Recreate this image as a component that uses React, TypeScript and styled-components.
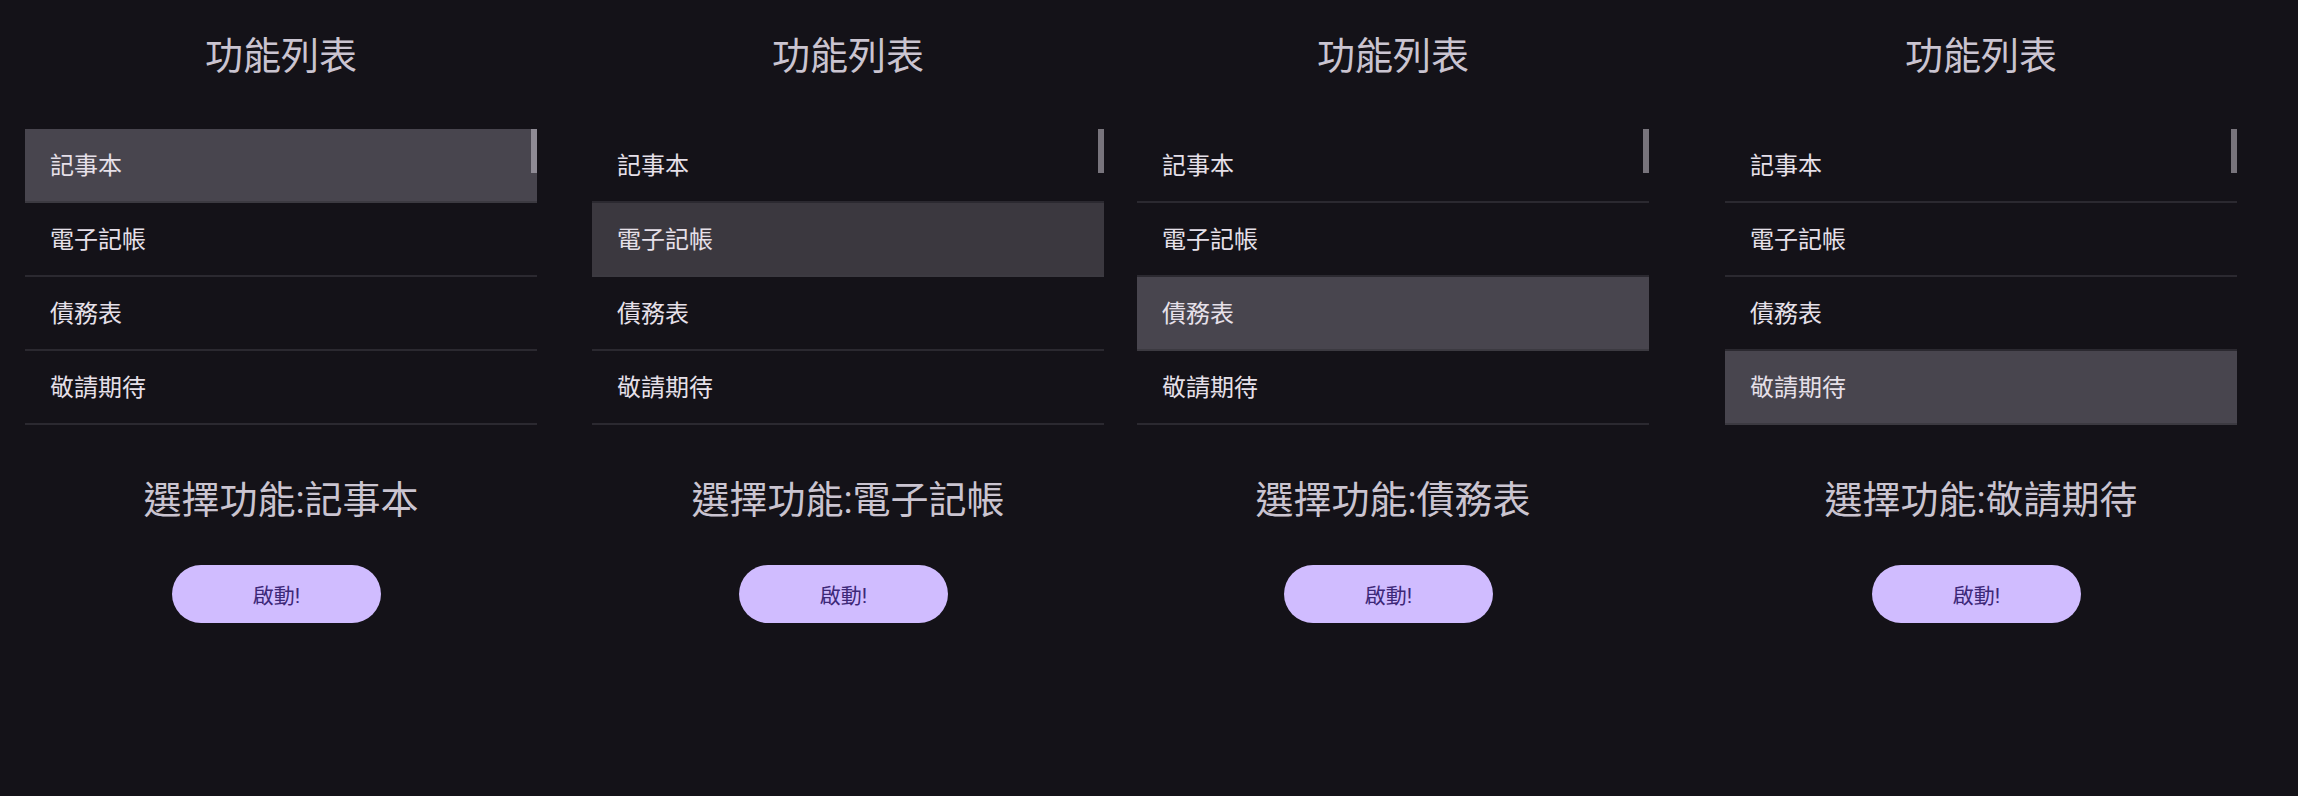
import React from "react";
import styled, { createGlobalStyle } from "styled-components";

const GlobalStyle = createGlobalStyle`
  html, body {
    margin: 0;
    padding: 0;
    background: #141218;
  }
  body {
    font-family: Roboto, "Noto Sans CJK TC", "Noto Sans", sans-serif;
    color: #e6e0e9;
  }
`;

const Screen = styled.div`
  display: flex;
  align-items: flex-start;
  padding-left: 25px;
  min-height: 796px;
  background: #141218;
  box-sizing: border-box;
`;

const Panel = styled.section<{ $offset: number }>`
  display: flex;
  flex-direction: column;
  align-items: center;
  width: 512px;
  margin-left: ${(p) => p.$offset}px;
`;

const Title = styled.h1`
  margin: 32px 0 0;
  font-size: 38px;
  line-height: 48px;
  font-weight: 400;
  color: #cac4d0;
`;

const List = styled.ul`
  position: relative;
  list-style: none;
  margin: 49px 0 0;
  padding: 0;
  width: 100%;
`;

const Item = styled.li<{ $selected: boolean; $tone: string }>`
  display: flex;
  align-items: center;
  box-sizing: border-box;
  height: 74px;
  padding: 0 0 3px 25px;
  font-size: 24px;
  color: #e6e0e9;
  background: ${(p) => (p.$selected ? p.$tone : "transparent")};
  border-bottom: 2px solid ${(p) => (p.$selected ? "#3c3a41" : "#2b2930")};
`;

const ScrollThumb = styled.div`
  position: absolute;
  top: 0;
  right: 0;
  width: 6px;
  height: 44px;
  background: rgba(202, 196, 208, 0.55);
`;

const Selection = styled.p`
  margin: 51px 0 0;
  font-size: 38px;
  line-height: 48px;
  color: #cac4d0;
`;

const LaunchButton = styled.button`
  margin: 41px 9px 0 0;
  width: 209px;
  height: 58px;
  border: none;
  border-radius: 29px;
  background: #d0bcff;
  color: #3d2878;
  font-family: Roboto, "Noto Sans CJK TC", sans-serif;
  font-size: 21px;
  cursor: pointer;
`;

const features = ["記事本", "電子記帳", "債務表", "敬請期待"];

const panels = [
  { offset: 0, selected: 0, tone: "#48454e" },
  { offset: 55, selected: 1, tone: "#3b383f" },
  { offset: 33, selected: 2, tone: "#48454e" },
  { offset: 76, selected: 3, tone: "#48454e" },
];

export default function App() {
  return (
    <>
      <GlobalStyle />
      <Screen>
        {panels.map((p, i) => (
          <Panel key={i} $offset={p.offset}>
            <Title>功能列表</Title>
            <List>
              {features.map((f, j) => (
                <Item key={f} $selected={j === p.selected} $tone={p.tone}>
                  {f}
                </Item>
              ))}
              <ScrollThumb />
            </List>
            <Selection>選擇功能:{features[p.selected]}</Selection>
            <LaunchButton>啟動!</LaunchButton>
          </Panel>
        ))}
      </Screen>
    </>
  );
}
